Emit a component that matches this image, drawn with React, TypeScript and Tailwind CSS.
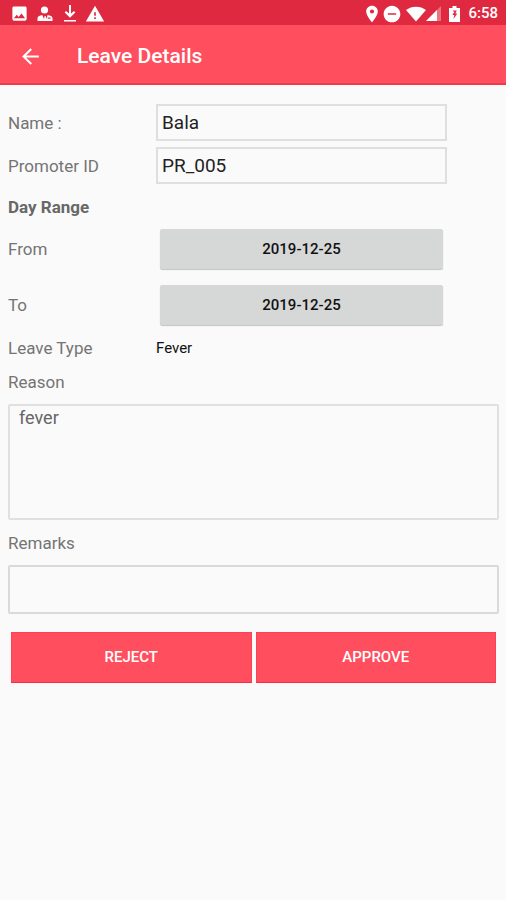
import { MdArrowBack, MdDoNotDisturbOn, MdImage, MdLocationOn, MdWarning } from "react-icons/md";

function PersonIcon() {
  return (
    <svg viewBox="0 0 16 16" className="h-4 w-4" fill="currentColor" aria-hidden="true">
      <circle cx="7.5" cy="4" r="3.6" />
      <path d="M.5 15v-2.800C.5 10.500 3 9.300 5.300 9L7 13l.7-3h1l.9 3 1-4c2.500.3 4.900 1.500 4.900 3.200V15z" />
      <path d="M10.800 11.500h2.800v1.200h-2.800z" fill="#df2940" />
    </svg>
  );
}

function DownloadIcon() {
  return (
    <svg viewBox="0 0 14 17" className="h-[17px] w-3.5" fill="currentColor" aria-hidden="true">
      <path d="M6 0h2v8.500l3-2.500 1.300 1.500L7 12.800 1.700 7.500 3 6l3 2.500zM1 15h12v1.600H1z" />
    </svg>
  );
}

function WifiIcon() {
  return (
    <svg viewBox="0 0 20 16" className="h-4 w-5" fill="currentColor" aria-hidden="true">
      <path d="M0 4C5.500-.5 14.500-.5 20 4L10 15.500z" />
    </svg>
  );
}

function SignalIcon() {
  return (
    <svg viewBox="0 0 15 15" className="h-[15px] w-[15px]" fill="currentColor" aria-hidden="true">
      <path d="M0 15 15 0v15z" opacity=".35" />
      <path d="M0 15 11 4v11z" />
    </svg>
  );
}

function BatteryIcon() {
  return (
    <svg viewBox="0 0 11 16" className="h-4 w-[11px]" fill="currentColor" aria-hidden="true">
      <path d="M3.500 0h4v2H11v14H0V2h3.500z" />
      <path d="M3.500 4.500h4.300L6.300 7.500h2L4.500 13l.8-4h-2l2-3z" fill="#df2940" />
    </svg>
  );
}

function StatusBar() {
  return (
    <div className="flex h-[25px] items-center justify-between bg-[#df2940] pt-0.5 pr-2 pl-2.5 text-white">
      <div className="flex items-center gap-2">
        <MdImage size={19} />
        <PersonIcon />
        <div className="flex pl-0.5">
          <DownloadIcon />
        </div>
        <MdWarning size={20} />
      </div>
      <div className="flex items-center">
        <MdLocationOn size={20} />
        <MdDoNotDisturbOn size={20} />
        <div className="ml-1 flex items-center">
          <WifiIcon />
          <SignalIcon />
        </div>
        <div className="mr-2 ml-2 flex">
          <BatteryIcon />
        </div>
        <span className="text-[15px] font-medium">6:58</span>
      </div>
    </div>
  );
}

const label = "text-[17px] leading-6 text-[#747474]";
const row = "grid grid-cols-[148px_1fr] items-center pr-[52px]";
const field =
  "h-[37px] w-full min-w-0 border-2 border-[#dfdfdf] bg-transparent px-1 text-[19px] text-[#222] outline-none";
const dateButton =
  "mx-1 h-10 rounded-xs bg-[#d6d8d7] text-[15px] font-medium text-[#111] shadow-[0_1px_1px_#c4c4c4]";
const action =
  "h-[51px] flex-1 border border-[#ff4055] border-b-[#f72c48] bg-[#ff4f5e] text-[15px] font-medium text-white";

export default function App() {
  return (
    <div className="min-h-screen bg-[#fafafa] font-[Roboto,sans-serif]">
      <StatusBar />
      <header className="flex h-[60px] items-center border-b-2 border-[#ef3b50] bg-[#ff4f5e] px-[18px] pt-1 text-white">
        <button type="button" aria-label="Back">
          <MdArrowBack size={25} />
        </button>
        <h1 className="ml-[34px] text-[21px] leading-6 font-medium">Leave Details</h1>
      </header>
      <form className="flex flex-col pt-[19px] pr-[7px] pl-2" onSubmit={(e) => e.preventDefault()}>
        <div className={row}>
          <label htmlFor="name" className={label}>Name :</label>
          <input id="name" defaultValue="Bala" className={field} />
        </div>
        <div className={`${row} mt-1.5`}>
          <label htmlFor="promoter" className={label}>Promoter ID</label>
          <input id="promoter" defaultValue="PR_005" className={field} />
        </div>
        <h2 className="mt-[11px] text-[17px] leading-6 font-bold text-[#686868]">Day Range</h2>
        <div className={`${row} mt-2.5`}>
          <label htmlFor="from" className={label}>From</label>
          <button id="from" type="button" className={dateButton}>2019-12-25</button>
        </div>
        <div className={`${row} mt-4`}>
          <label htmlFor="to" className={label}>To</label>
          <button id="to" type="button" className={dateButton}>2019-12-25</button>
        </div>
        <div className={`${row} mt-[11px]`}>
          <span className={label}>Leave Type</span>
          <span className="text-[15px] leading-6 text-[#111]">Fever</span>
        </div>
        <label htmlFor="reason" className={`${label} mt-2.5`}>Reason</label>
        <textarea
          id="reason"
          defaultValue="fever"
          className="mt-2.5 h-[116px] resize-none rounded-xs border-2 border-[#e0e0e0] bg-transparent px-[9px] text-lg leading-6 text-[#666] outline-none"
        />
        <label htmlFor="remarks" className={`${label} mt-[11px]`}>Remarks</label>
        <input
          id="remarks"
          className="mt-2.5 h-[49px] rounded-xs border-2 border-[#dadada] bg-transparent px-2 text-lg text-[#666] outline-none"
        />
        <div className="mt-[18px] flex gap-1 px-[3px]">
          <button type="button" className={action}>REJECT</button>
          <button type="submit" className={action}>APPROVE</button>
        </div>
      </form>
    </div>
  );
}
